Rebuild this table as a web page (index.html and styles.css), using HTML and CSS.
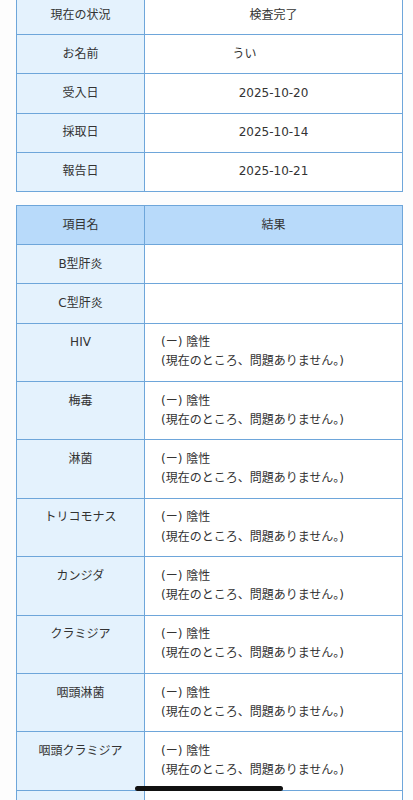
FILE: index.html
```html
<!DOCTYPE html>
<html lang="ja">
<head>
<meta charset="utf-8">
<link rel="stylesheet" href="styles.css">
</head>
<body>
<main class="page">
  <table class="info">
    <tr><th>現在の状況</th><td>検査完了</td></tr>
    <tr><th>お名前</th><td><span class="name-val">うい</span></td></tr>
    <tr><th>受入日</th><td>2025-10-20</td></tr>
    <tr><th>採取日</th><td>2025-10-14</td></tr>
    <tr><th>報告日</th><td>2025-10-21</td></tr>
  </table>

  <table class="results">
    <thead>
      <tr><th>項目名</th><th class="head-res">結果</th></tr>
    </thead>
    <tbody>
      <tr><th>B型肝炎</th><td></td></tr>
      <tr><th>C型肝炎</th><td></td></tr>
      <tr><th>HIV</th><td>(ー) 陰性<br>(現在のところ、問題ありません。)</td></tr>
      <tr><th>梅毒</th><td>(ー) 陰性<br>(現在のところ、問題ありません。)</td></tr>
      <tr><th>淋菌</th><td>(ー) 陰性<br>(現在のところ、問題ありません。)</td></tr>
      <tr><th>トリコモナス</th><td>(ー) 陰性<br>(現在のところ、問題ありません。)</td></tr>
      <tr><th>カンジダ</th><td>(ー) 陰性<br>(現在のところ、問題ありません。)</td></tr>
      <tr><th>クラミジア</th><td>(ー) 陰性<br>(現在のところ、問題ありません。)</td></tr>
      <tr><th>咽頭淋菌</th><td>(ー) 陰性<br>(現在のところ、問題ありません。)</td></tr>
      <tr><th>咽頭クラミジア</th><td>(ー) 陰性<br>(現在のところ、問題ありません。)</td></tr>
      <tr><th>&nbsp;</th><td>&nbsp;</td></tr>
    </tbody>
  </table>
</main>
<div class="home-indicator"></div>
</body>
</html>
```

FILE: styles.css
```css
html, body {
  margin: 0;
  padding: 0;
  background: #fdfdfd;
  overflow: hidden;
  height: 800px;
}

body {
  font-family: "DejaVu Sans", "Noto Sans CJK JP", sans-serif;
  font-size: 12px;
  color: #333;
}

.page {
  padding: 0 10px 0 16px;
  margin-top: -5px;
}

table {
  width: 387px;
  border-collapse: collapse;
  table-layout: fixed;
  background: #fff;
}

th, td {
  border: 1px solid #6ea6da;
  padding: 9.5px 0;
  line-height: 19.2px;
  font-weight: normal;
}

th {
  width: 127px;
  background: #e4f2fd;
  text-align: center;
  vertical-align: top;
}

.info td {
  text-align: center;
}

.name-val {
  padding-right: 58px;
}

.results {
  margin-top: 13px;
}

.results thead th {
  background: #b8dafa;
}

.results td {
  padding-left: 16px;
  text-align: left;
}

.results .head-res {
  width: auto;
  text-align: center;
}

.home-indicator {
  position: fixed;
  left: 135px;
  bottom: 9px;
  width: 148px;
  height: 5px;
  border-radius: 3px;
  background: #111;
}
```
